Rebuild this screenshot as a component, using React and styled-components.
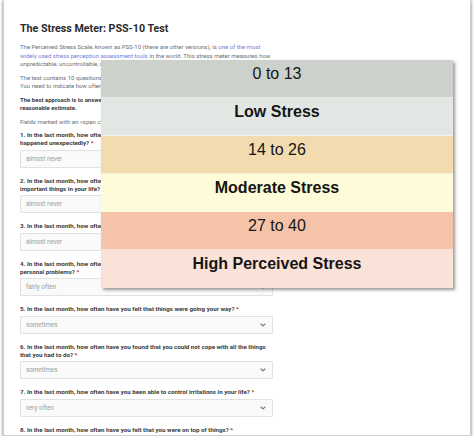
import React from 'react';
import styled, { createGlobalStyle } from 'styled-components';

const GlobalStyle = createGlobalStyle`
  html, body {
    margin: 0;
    padding: 0;
    background: #fff;
  }
  body {
    font-family: Roboto, "Liberation Sans", sans-serif;
  }
`

const Frame = styled.div`
  position: relative;
  height: 436px;
  margin: 0 3px;
  padding: 22px 16px 0;
  box-sizing: border-box;
  overflow: hidden;
  background: #fff;
  border: 1px solid #cfcfcf;
  border-top: none;
  box-shadow: 0 2px 3px rgba(0, 0, 0, 0.3), 1px 0 2px rgba(0, 0, 0, 0.15), -1px 0 2px rgba(0, 0, 0, 0.15);
`

const Column = styled.div`
  width: 253px;
`

const Title = styled.h1`
  margin: 0 0 7px;
  font-size: 10.7px;
  line-height: 14px;
  font-weight: 700;
  color: #2b2b2b;
`

const Para = styled.p`
  margin: 0 0 5px;
  font-size: 6px;
  line-height: 8.5px;
  white-space: nowrap;
  color: #6f6f6f;
  font-weight: ${p => (p.$bold ? 700 : 400)};

  ${p => p.$bold && 'color: #3a3a3a;'}

  a {
    color: #7280dc;
    text-decoration: none;
  }
`

const Field = styled.div`
  margin-bottom: 9px;
`

const Label = styled.div`
  margin-bottom: 2.5px;
  font-size: 6.2px;
  line-height: 8px;
  font-weight: 700;
  white-space: nowrap;
  color: #3b3b3b;
`

const Req = styled.span`
  color: #c02b0a;
`

const Select = styled.div`
  display: flex;
  align-items: center;
  justify-content: space-between;
  height: 18px;
  padding: 0 6px 0 5px;
  box-sizing: border-box;
  background: #fafafa;
  border: 1px solid #e2e2e2;
  border-radius: 1px;
  font-size: 6.3px;
  color: #9a9a9a;
`

const Chevron = () => (
  <svg width="6" height="4" viewBox="0 0 6 4">
    <polyline points="0.6,0.6 3,3 5.4,0.6" fill="none" stroke="#7a7a7a" strokeWidth="1.2" />
  </svg>
)

const Scale = styled.div`
  position: absolute;
  left: 97px;
  top: 60px;
  width: 352px;
  box-shadow: 2px 2px 3px rgba(0, 0, 0, 0.4);
  font-family: "Liberation Sans", Arial, sans-serif;
`

const Band = styled.div`
  height: 38px;
  padding-top: 5px;
  box-sizing: border-box;
  text-align: center;
  font-size: 16px;
  line-height: 18px;
  color: #151515;
  background: ${p => p.$bg};
  font-weight: ${p => (p.$bold ? 700 : 400)};
  border-bottom: 1px solid rgba(255, 255, 255, 0.5);

  &:last-child {
    border-bottom: none;
  }
`

const bands = [
  { text: '0 to 13', bg: '#ccd2cb' },
  { text: 'Low Stress', bg: '#e2e7e3', bold: true },
  { text: '14 to 26', bg: '#f3dbb0' },
  { text: 'Moderate Stress', bg: '#fdfbd8', bold: true },
  { text: '27 to 40', bg: '#f5c3a7' },
  { text: 'High Perceived Stress', bg: '#fbe2d8', bold: true },
]

const questions = [
  { lines: ['1. In the last month, how often have you been upset because of something that', 'happened unexpectedly?'], value: 'almost never' },
  { lines: ['2. In the last month, how often have you felt that you were unable to control the', 'important things in your life?'], value: 'almost never' },
  { lines: ['3. In the last month, how often have you felt nervous and stressed?'], value: 'almost never' },
  { lines: ['4. In the last month, how often have you felt confident about your ability to handle your', 'personal problems?'], value: 'fairly often' },
  { lines: ['5. In the last month, how often have you felt that things were going your way?'], value: 'sometimes' },
  { lines: ['6. In the last month, how often have you found that you could not cope with all the things', 'that you had to do?'], value: 'sometimes' },
  { lines: ['7. In the last month, how often have you been able to control irritations in your life?'], value: 'very often' },
  { lines: ['8. In the last month, how often have you felt that you were on top of things?'], value: 'almost never' },
]

export default () => (
  <>
    <GlobalStyle />
    <Frame>
      <Column>
        <Title>The Stress Meter: PSS-10 Test</Title>
        <Para>
          The Perceived Stress Scale, known as PSS-10 (there are other versions), is <a href="#pss">one of the most<br />
          widely used stress perception assessment tools</a> in the world. This stress meter measures how<br />
          unpredictable, uncontrollable, and overloaded you find your life.
        </Para>
        <Para>
          The test contains 10 questions about your feelings and thoughts.<br />
          You need to indicate how often you felt or thought a certain way.
        </Para>
        <Para $bold>
          The best approach is to answer fairly quickly, without counting.<br />
          reasonable estimate.
        </Para>
        <Para>Fields marked with an &lt;span class="gfield_required"&gt;*&lt;/span&gt; are required</Para>
        {questions.map(q => (
          <Field key={q.lines[0]}>
            <Label>
              {q.lines.map((line, i) => (
                <React.Fragment key={i}>
                  {i > 0 && <br />}
                  {line}
                </React.Fragment>
              ))}{' '}
              <Req>*</Req>
            </Label>
            <Select>
              <span>{q.value}</span>
              <Chevron />
            </Select>
          </Field>
        ))}
      </Column>
      <Scale>
        {bands.map(b => (
          <Band key={b.text} $bg={b.bg} $bold={b.bold}>{b.text}</Band>
        ))}
      </Scale>
    </Frame>
  </>
)
